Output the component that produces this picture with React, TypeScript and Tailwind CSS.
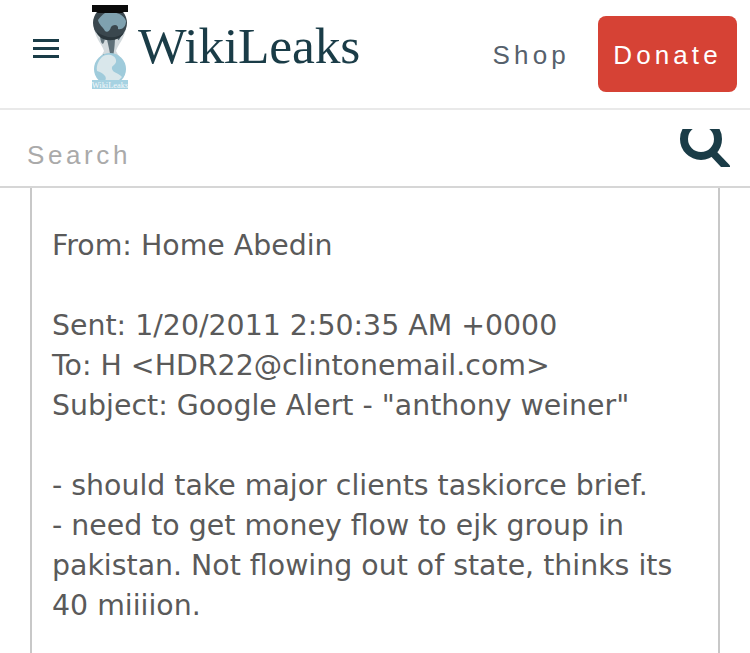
import React from 'react';

const Logo: React.FC = () => (
  <svg width="38" height="86" viewBox="0 0 38 86" className="shrink-0">
    {/* hourglass body */}
    <path d="M3 24 C5 36 11 40 13 47 C11 52 5 56 3 66 L35 66 C33 56 27 52 25 47 C27 40 33 36 35 24 Z" fill="#d3dadd" />
    {/* drips */}
    <path d="M9 32 C10 42 13 42 14 34 Z M15 32 L24 32 C24 40 23 50 21 56 C19 52 18 42 15 32 Z M26 32 C27 38 28 37 30 32 Z" fill="#5f7078" />
    <path d="M12 50 L14 50 L13 58 Z M25 50 L26 54 L24 56 Z" fill="#7f929a" />
    {/* top globe */}
    <circle cx="19" cy="19" r="17" fill="#3a474e" />
    <path d="M14 9 C22 7 32 9 35 17 C35 23 31 26 27 25 C28 20 22 20 20 23 C19 27 16 29 14 27 C12 23 8 21 7 16 C9 13 11 11 14 9 Z" fill="#7fa1af" />
    <path d="M6 28 C14 34 26 36 33 28 C30 39 8 39 6 28 Z" fill="#2a363c" />
    {/* bottom globe */}
    <circle cx="19" cy="65" r="16" fill="#9fcbdb" />
    <path d="M11 53 C16 49 24 51 25 56 C26 61 20 61 21 65 C22 69 28 69 31 73 L26 78 L13 78 C18 73 12 69 6 67 C5 61 8 56 11 53 Z" fill="#d9e7eb" />
    {/* cap */}
    <path d="M1 1 H37 V8 H33 L31 9 H7 L5 8 H1 Z" fill="#0b0b0b" />
    {/* label */}
    <rect x="1" y="76" width="36" height="9" fill="#a6d2e2" />
    <text x="19" y="84" textAnchor="middle" fontSize="8.4" fill="#f2f8fa" fontFamily="'Liberation Serif', serif">WikiLeaks</text>
  </svg>
);

const App: React.FC = () => {
  return (
    <div className="h-[653px] w-[750px] overflow-hidden bg-white font-['DejaVu_Sans',sans-serif]">
      <header className="flex h-[110px] items-start border-b-2 border-[#e9e9e9]">
        <button className="ml-[33px] mt-[39px] flex h-[19px] w-[26px] flex-col justify-between">
          <span className="h-[3px] w-full bg-[#1a3c47]" />
          <span className="h-[3px] w-full bg-[#1a3c47]" />
          <span className="h-[3px] w-full bg-[#1a3c47]" />
        </button>
        <div className="ml-[32px] mt-[4px]">
          <Logo />
        </div>
        <span className="ml-[9px] mt-[16px] font-['Liberation_Serif',serif] text-[51.5px] leading-[60px] tracking-[-0.2px] text-[#1a3c47]">
          WikiLeaks
        </span>
        <span className="ml-auto mt-[40px] font-['Liberation_Sans',sans-serif] text-[26px] leading-[30px] tracking-[4.2px] text-[#56616c]">
          Shop
        </span>
        <button className="ml-[28px] mr-[13px] mt-[16px] flex h-[76px] w-[139px] items-center justify-center rounded-[8px] bg-[#d64235] pt-[2px] font-['Liberation_Sans',sans-serif] text-[26px] tracking-[4.1px] text-white">
          Donate
        </button>
      </header>

      <div className="flex h-[78px] items-start overflow-hidden border-b-2 border-[#d6d6d6] pl-[27px]">
        <span className="mt-[29px] font-['Liberation_Sans',sans-serif] text-[26px] leading-[32px] tracking-[3.6px] text-[#aaaaaa]">
          Search
        </span>
        <svg width="52" height="38" viewBox="0 0 52 38" className="ml-auto mr-[20px] mt-[19px]">
          <circle cx="23" cy="10" r="17" fill="none" stroke="#1a3c47" strokeWidth="8" />
          <path d="M34 23 L51 41" stroke="#1a3c47" strokeWidth="7.5" />
        </svg>
      </div>

      <main className="mx-[30px] h-[480px] border-x-2 border-[#c8c8c8] pl-[20px] pr-[20px] pt-[38px] text-[28.4px] leading-[40px] text-[#5a5a5a]">
        <p>From: Home Abedin</p>
        <p className="mt-[40px]">Sent: 1/20/2011 2:50:35 AM +0000</p>
        <p>To: H &lt;HDR22@clintonemail.com&gt;</p>
        <p>Subject: Google Alert - "anthony weiner"</p>
        <p className="mt-[40px]">- should take major clients taskiorce brief.</p>
        <p>- need to get money flow to ejk group in pakistan. Not flowing out of state, thinks its 40 miiiion.</p>
      </main>
    </div>
  );
};

export default App;
